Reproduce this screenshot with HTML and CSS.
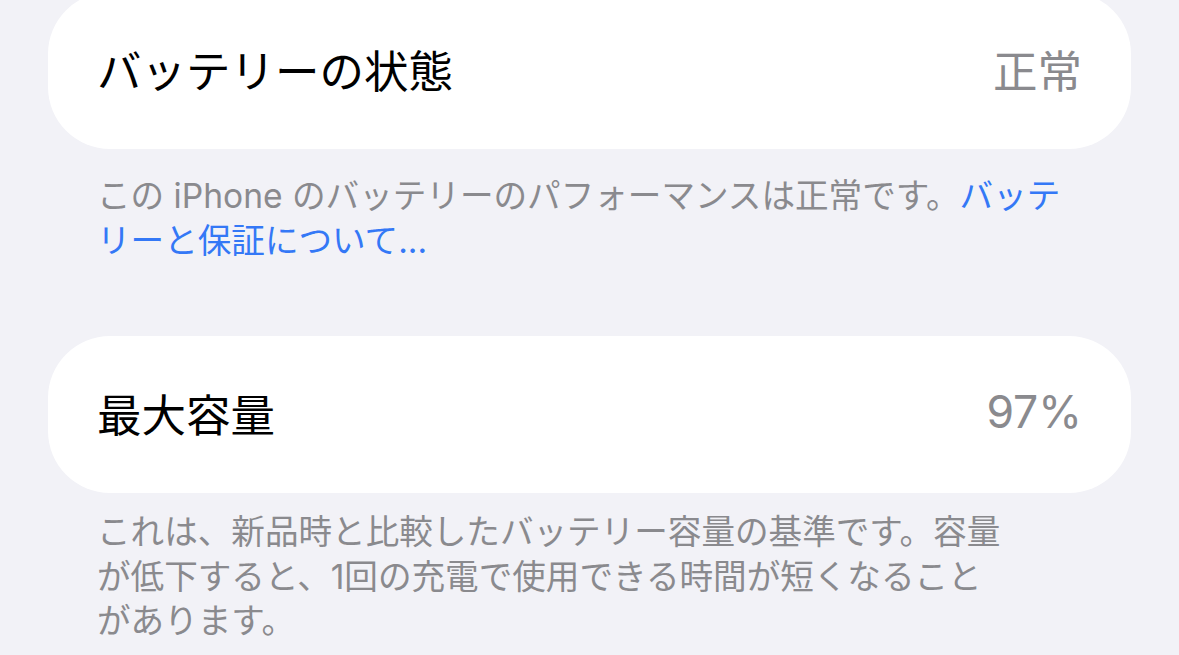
FILE: index.html
```html
<!DOCTYPE html>
<html lang="ja">
<head>
	<meta charset="utf-8">
	<title>バッテリー</title>
	<link rel="stylesheet" href="styles.css">
</head>
<body>
	<div class="page">
		<div class="group">
			<div class="cell">
				<span class="label">バッテリーの状態</span>
				<span class="value">正常</span>
			</div>
			<p class="footer footer-first">この iPhone のバッテリーのパフォーマンスは正常です。<a class="link" href="#">バッテ<br>リーと保証について...</a></p>
		</div>
		<div class="group">
			<div class="cell">
				<span class="label">最大容量</span>
				<span class="value">97%</span>
			</div>
			<p class="footer">これは、新品時と比較したバッテリー容量の基準です。容量<br>が低下すると、1回の充電で使用できる時間が短くなること<br>があります。</p>
		</div>
	</div>
</body>
</html>
```

FILE: styles.css
```css
body {
	margin: 0;
	background-color: #f2f2f7;
	font-family: Inter, "Noto Sans CJK JP", sans-serif;
	overflow: hidden;
}
.page {
	padding: 0 48px;
	margin-top: -8px;
}
.group {
	margin-bottom: 73px;
}
.cell {
	display: flex;
	align-items: center;
	justify-content: space-between;
	height: 152px;
	padding: 0 49px 5px 49px;
	background-color: #ffffff;
	border-radius: 62px;
}
.label {
	font-size: 44.5px;
	color: #000000;
}
.value {
	font-size: 44.5px;
	color: #8a8a8e;
}
.footer {
	margin: 0;
	padding: 17px 49px 0;
	font-size: 33.6px;
	line-height: 44.5px;
	color: #8a8a8e;
}
.footer-first {
	padding-top: 25px;
}
.link {
	color: #3478f6;
	text-decoration: none;
}
```
